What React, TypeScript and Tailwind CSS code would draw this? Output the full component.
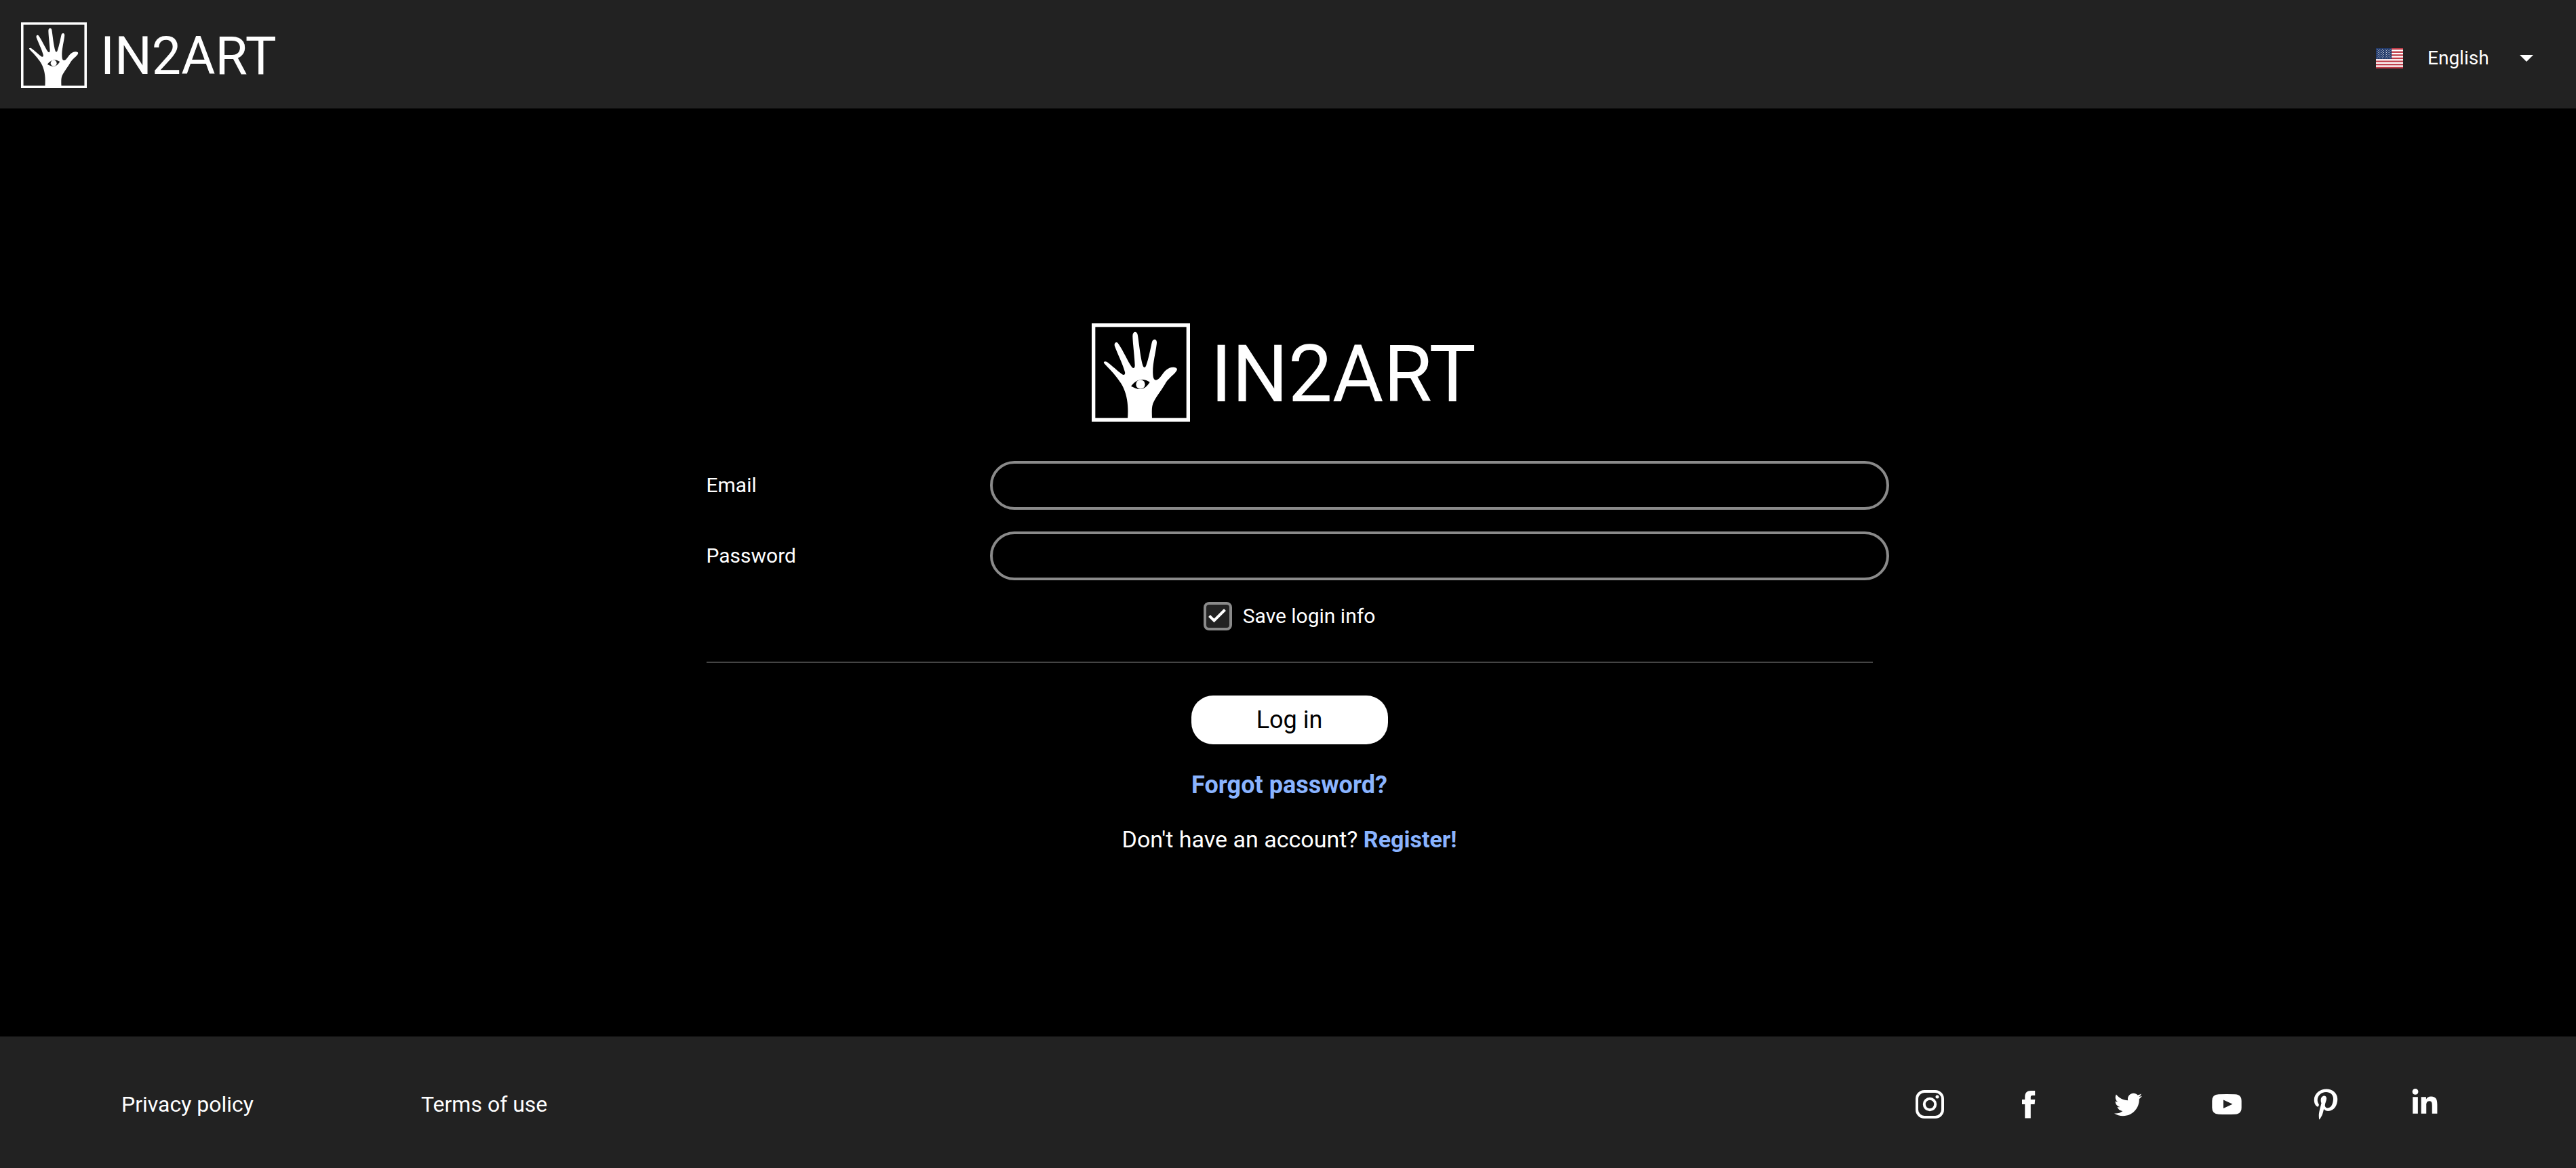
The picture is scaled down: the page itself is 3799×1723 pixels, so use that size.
import { FaTwitter, FaPinterestP, FaLinkedinIn } from "react-icons/fa";

function HandMark({ className }: { className: string }) {
  return (
    <svg viewBox="0 0 435 435" className={className} aria-hidden="true">
      <rect x="8" y="8" width="419" height="419" fill="none" stroke="white" strokeWidth="16" />
      <g transform="translate(-36 -36)" fill="white">
        <path
          fillRule="evenodd"
          d="M195 458 C199 405 194 365 180 330 C170 303 157 290 145 273 C128 250 108 232 91 213 C86 206 95 202 104 207 C125 222 150 247 170 261 C180 268 187 261 182 248 C172 212 150 170 138 137 C133 122 146 115 153 125 C172 150 196 205 213 229 C220 238 227 234 227 222 C226 185 218 130 217 92 C217 69 238 69 240 90 C246 130 252 190 262 222 C266 234 273 234 277 222 C290 185 295 150 303 118 C307 103 325 104 324 122 C320 165 304 215 307 262 C308 290 320 292 334 280 C350 262 358 243 380 233 C395 227 418 230 413 243 C405 260 380 275 365 297 C350 325 325 355 312 380 C300 400 302 425 303 458 Z M210 314 C228 290 248 284 262 285 C275 286 285 291 293 296 C283 312 270 325 252 327 C238 328 224 320 210 314 Z"
        />
        <circle cx="252" cy="306" r="20" />
      </g>
    </svg>
  );
}

function UsFlag() {
  const stripes = Array.from({ length: 7 }, (_, i) => i * 2);
  const stars = Array.from({ length: 9 }, (_, row) =>
    Array.from({ length: row % 2 ? 5 : 6 }, (_, col) => ({
      x: 2 + col * 3.8 + (row % 2 ? 1.9 : 0),
      y: 1.6 + row * 1.6,
    })),
  ).flat();
  return (
    <svg viewBox="0 0 40 30" className="h-[30px] w-10" aria-hidden="true">
      <rect width="40" height="30" fill="white" />
      {stripes.map((n) => (
        <rect key={n} y={(n * 30) / 13} width="40" height={30 / 13} fill="#bf3b47" />
      ))}
      <rect width="23" height="16" fill="#213969" />
      {stars.map((s) => (
        <circle key={`${s.x}-${s.y}`} cx={s.x} cy={s.y} r="0.55" fill="white" />
      ))}
    </svg>
  );
}

function InstagramIcon() {
  return (
    <svg viewBox="0 0 42 42" className="size-[42px]" aria-hidden="true">
      <rect x="2" y="2" width="38" height="38" rx="11" fill="none" stroke="white" strokeWidth="4" />
      <circle cx="21" cy="21" r="8.2" fill="none" stroke="white" strokeWidth="4" />
      <circle cx="32" cy="10" r="2.5" fill="white" />
    </svg>
  );
}

function FacebookIcon() {
  return (
    <svg viewBox="0 0 20 42" className="h-[42px] w-5" aria-hidden="true">
      <path
        fill="white"
        d="M4.3 41.5 V21 H0 V14 H4.3 V10 C4.3 4 7.5 1 13 1 H19.2 V8 H15.5 C13.5 8 12.8 8.8 12.8 10.5 V14 H19.3 L18.6 21 H12.8 V41.5 Z"
      />
    </svg>
  );
}

function YoutubeIcon() {
  return (
    <svg viewBox="0 0 44 30" className="h-[30px] w-11" aria-hidden="true">
      <path
        fill="white"
        fillRule="evenodd"
        d="M10 0.3 Q22 -0.3 34 0.3 Q43.7 0.6 43.7 10 V20 Q43.7 29.4 34 29.7 Q22 30.3 10 29.7 Q0.3 29.4 0.3 20 V10 Q0.3 0.6 10 0.3 Z M17 8.5 V21 L30.5 14.8 Z"
      />
    </svg>
  );
}

function Field({ id, label, type }: { id: string; label: string; type: string }) {
  return (
    <div className="flex items-center">
      <label htmlFor={id} className="w-[418px] shrink-0 text-[30px] leading-10">
        {label}
      </label>
      <input
        id={id}
        type={type}
        className="-mr-6 h-[72px] min-w-0 flex-1 rounded-full border-4 border-[#8a8a8a] bg-black px-6 text-[28px] text-white outline-none"
      />
    </div>
  );
}

const socials = [
  { name: "Instagram", icon: <InstagramIcon /> },
  { name: "Facebook", icon: <FacebookIcon /> },
  { name: "Twitter", icon: <FaTwitter className="size-[41px]" /> },
  { name: "YouTube", icon: <YoutubeIcon /> },
  { name: "Pinterest", icon: <FaPinterestP className="size-[46px]" /> },
  { name: "LinkedIn", icon: <FaLinkedinIn className="mb-1 size-[42px]" /> },
];

export default function App() {
  return (
    <div className="flex min-h-screen flex-col bg-black font-['Roboto',sans-serif] text-white">
      <header className="flex items-center justify-between bg-[#222222] pt-[33px] pr-[63px] pb-[30px] pl-[31px]">
        <a href="#" className="flex items-center gap-5">
          <HandMark className="size-[97px]" />
          <span className="pt-1 text-[77px] leading-none">IN2ART</span>
        </a>
        <div className="flex items-center gap-9 pt-2">
          <UsFlag />
          <div className="relative">
            <select
              aria-label="Language"
              className="w-[156px] appearance-none bg-transparent text-[28px] leading-10 text-white outline-none"
            >
              <option>English</option>
            </select>
            <svg
              viewBox="0 0 20 10"
              className="pointer-events-none absolute top-1/2 right-0 h-[10px] w-5 -translate-y-1/2"
              aria-hidden="true"
            >
              <path d="M0 0 H20 L10 10 Z" fill="white" />
            </svg>
          </div>
        </div>
      </header>

      <main className="flex flex-1 flex-col items-center pt-[317px] pb-16 pl-1">
        <div className="flex items-center gap-[30px] pr-4">
          <HandMark className="size-[145px]" />
          <h1 className="pt-1 text-[116px] leading-none">IN2ART</h1>
        </div>

        <form
          className="mt-[58px] flex w-full max-w-[1720px] flex-col"
          onSubmit={(e) => e.preventDefault()}
        >
          <div className="flex flex-col gap-8">
            <Field id="email" label="Email" type="email" />
            <Field id="password" label="Password" type="password" />
            <label className="flex items-center gap-4 self-center">
              <span className="relative size-[42px]">
                <input
                  type="checkbox"
                  defaultChecked
                  className="peer block size-full appearance-none rounded-lg border-4 border-[#8a8a8a] bg-[#222222]"
                />
                <svg
                  viewBox="0 0 42 42"
                  className="pointer-events-none absolute inset-0 hidden peer-checked:block"
                  aria-hidden="true"
                >
                  <path d="M8.5 20.5 L15.5 27.5 L31.5 11.5" fill="none" stroke="white" strokeWidth="4" />
                </svg>
              </span>
              <span className="text-[30px] leading-10">Save login info</span>
            </label>
          </div>
          <hr className="mt-[46px] border-t-2 border-[#444444]" />
          <button
            type="submit"
            className="mt-12 h-[72px] w-[290px] self-center rounded-[32px] bg-white text-4xl text-black"
          >
            Log in
          </button>
        </form>

        <a href="#" className="mt-9 text-[36px] leading-[48px] font-bold text-[#8ab4ff]">
          Forgot password?
        </a>
        <p className="mt-8 text-[34px] leading-[48px]">
          Don't have an account?{" "}
          <a href="#" className="font-bold text-[#8ab4ff]">
            Register!
          </a>
        </p>
      </main>

      <footer className="flex items-center justify-between bg-[#222222] pt-[76px] pr-[150px] pb-[70px] pl-[179px]">
        <nav className="flex text-[32px] leading-[48px]">
          <a href="#" className="w-[442px]">
            Privacy policy
          </a>
          <a href="#">Terms of use</a>
        </nav>
        <ul className="flex">
          {socials.map((s) => (
            <li key={s.name}>
              <a href="#" aria-label={s.name} className="flex h-12 w-[146px] items-center justify-center">
                {s.icon}
              </a>
            </li>
          ))}
        </ul>
      </footer>
    </div>
  );
}
